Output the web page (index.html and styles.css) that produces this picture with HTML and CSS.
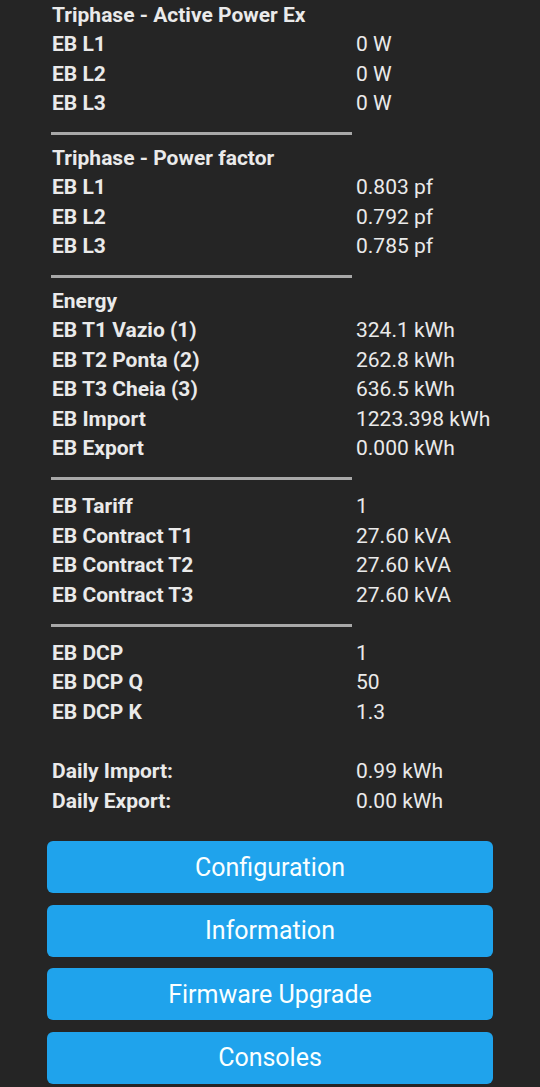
FILE: index.html
```html
<!DOCTYPE html>
<html lang="en">
<head>
  <meta charset="UTF-8">
  <meta name="viewport" content="width=device-width, initial-scale=1.0">
  <title>Energy Meter</title>
  <link rel="stylesheet" href="styles.css">
</head>
<body>
  <div class="main">
    <table class="sns">
      <tr class="title"><th colspan="2">Triphase - Active Power Ex</th></tr>
      <tr><th>EB L1</th><td>0 W</td></tr>
      <tr><th>EB L2</th><td>0 W</td></tr>
      <tr><th>EB L3</th><td>0 W</td></tr>
      <tr class="sep"><td colspan="2"><hr></td></tr>

      <tr class="title"><th colspan="2">Triphase - Power factor</th></tr>
      <tr><th>EB L1</th><td>0.803 pf</td></tr>
      <tr><th>EB L2</th><td>0.792 pf</td></tr>
      <tr><th>EB L3</th><td>0.785 pf</td></tr>
      <tr class="sep"><td colspan="2"><hr></td></tr>

      <tr class="title"><th colspan="2">Energy</th></tr>
      <tr><th>EB T1 Vazio (1)</th><td>324.1 kWh</td></tr>
      <tr><th>EB T2 Ponta (2)</th><td>262.8 kWh</td></tr>
      <tr><th>EB T3 Cheia (3)</th><td>636.5 kWh</td></tr>
      <tr><th>EB Import</th><td>1223.398 kWh</td></tr>
      <tr><th>EB Export</th><td>0.000 kWh</td></tr>
      <tr class="sep"><td colspan="2"><hr></td></tr>

      <tr><th>EB Tariff</th><td>1</td></tr>
      <tr><th>EB Contract T1</th><td>27.60 kVA</td></tr>
      <tr><th>EB Contract T2</th><td>27.60 kVA</td></tr>
      <tr><th>EB Contract T3</th><td>27.60 kVA</td></tr>
      <tr class="sep"><td colspan="2"><hr></td></tr>

      <tr><th>EB DCP</th><td>1</td></tr>
      <tr><th>EB DCP Q</th><td>50</td></tr>
      <tr><th>EB DCP K</th><td>1.3</td></tr>
      <tr class="blank"><td colspan="2">&nbsp;</td></tr>

      <tr><th>Daily Import:</th><td>0.99 kWh</td></tr>
      <tr><th>Daily Export:</th><td>0.00 kWh</td></tr>
    </table>

    <div class="menu">
      <button>Configuration</button>
      <button>Information</button>
      <button>Firmware Upgrade</button>
      <button>Consoles</button>
    </div>
  </div>
</body>
</html>
```

FILE: styles.css
```css
body {
  margin: 0;
  background: #252525;
  color: #eaeaea;
  font-family: Roboto, "Liberation Sans", sans-serif;
}
.main {
  width: 446px;
  margin: 0 auto;
  padding-top: 4px;
}
.sns {
  border-collapse: collapse;
  margin-left: 5px;
  font-size: 21px;
}
.sns th,
.sns td {
  padding: 0;
  height: 29.6px;
  line-height: 29.6px;
  text-align: left;
  vertical-align: middle;
  white-space: nowrap;
}
.sns th {
  width: 304px;
  font-weight: 700;
}
.sns td {
  font-weight: 400;
}
.sns .title th {
  height: 26px;
  line-height: 22px;
  vertical-align: top;
}
.sns .sep td {
  height: 28.2px;
  vertical-align: top;
}
.sns hr {
  width: 301px;
  height: 3px;
  margin: 13.5px 0 0 -1px;
  border: 0;
  background: #a8a8a8;
}
.menu {
  display: flex;
  flex-direction: column;
  gap: 11.5px;
  margin-top: 25px;
}
.menu button {
  height: 52px;
  border: 0;
  border-radius: 6px;
  background: #1fa3ec;
  color: #faffff;
  font-family: Roboto, "Liberation Sans", sans-serif;
  font-size: 25px;
  cursor: pointer;
}
```
